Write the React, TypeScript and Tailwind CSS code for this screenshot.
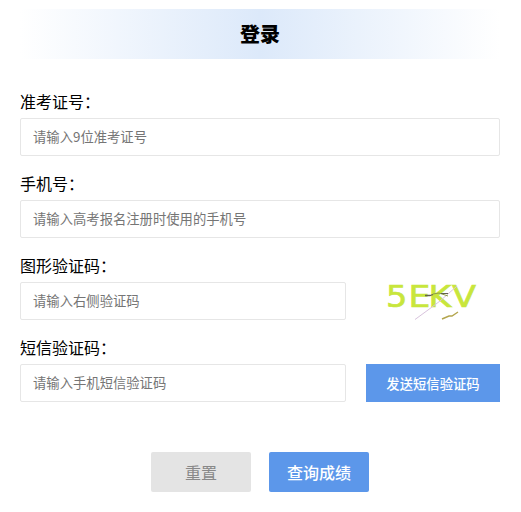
import React, { useState } from "react";

interface FieldProps {
  label: string;
  placeholder: string;
  value: string;
  onChange: (value: string) => void;
  children?: React.ReactNode;
}

const Field: React.FC<FieldProps> = ({
  label,
  placeholder,
  value,
  onChange,
  children,
}) => {
  return (
    <div>
      <label className="block h-8 text-base leading-[30px] text-black">
        {label}
      </label>
      <div className="flex gap-5">
        <input
          className="h-[38px] min-w-0 flex-1 rounded-[2px] border border-[#e6e6e6] bg-white pb-0.5 pl-3 text-[13.333px] text-black outline-none placeholder:text-[#757575]"
          placeholder={placeholder}
          value={value}
          onChange={(e) => onChange(e.target.value)}
        />
        {children}
      </div>
    </div>
  );
};

const Captcha: React.FC = () => {
  return (
    <svg className="h-[38px] w-[134px] overflow-visible" viewBox="0 0 134 38">
      <g
        fill="#c8e63c"
        stroke="#c8e63c"
        strokeWidth="0.7"
        fontFamily="'DejaVu Sans', sans-serif"
        fontSize="30"
      >
        <text transform="translate(19.9 24.7) scale(1.12 1)">5</text>
        <text transform="translate(42.4 24.7) scale(1.15 1)">E</text>
        <text transform="translate(62.4 24.7) scale(1.15 1)">K</text>
        <text transform="translate(86 24.7) scale(1.17 1)">V</text>
      </g>
      <g fill="none">
        <path d="M49 37.5 62 28 74 19 91 4" stroke="#d8c3dd" />
        <path d="M59 13.5h5l3-1" stroke="#62614e" strokeWidth="1.3" />
        <path d="M67 12l6-1 9 3" stroke="#8d9b45" />
        <path d="M75 11.5h7" stroke="#62614e" />
        <path d="M76 37l7-3h3l6-4" stroke="#b3a54d" strokeWidth="1.4" />
      </g>
    </svg>
  );
};

const App: React.FC = () => {
  const [form, setForm] = useState({
    ticket: "",
    phone: "",
    captcha: "",
    smsCode: "",
  });

  const handleReset = () => {
    setForm({ ticket: "", phone: "", captcha: "", smsCode: "" });
  };

  return (
    <div className="h-[512px] w-[521px] bg-white pt-[9px] pr-[21px] pl-5 font-['Noto_Sans_CJK_SC',sans-serif]">
      <h1 className="h-[50px] bg-linear-to-r/srgb from-white via-[#dce9fa] to-white text-center text-xl leading-[50px] font-black text-black">
        登录
      </h1>
      <form className="mt-[27px]" onSubmit={(e) => e.preventDefault()}>
        <div className="flex flex-col gap-3">
          <Field
            label="准考证号："
            placeholder="请输入9位准考证号"
            value={form.ticket}
            onChange={(ticket) => setForm({ ...form, ticket })}
          />
          <Field
            label="手机号："
            placeholder="请输入高考报名注册时使用的手机号"
            value={form.phone}
            onChange={(phone) => setForm({ ...form, phone })}
          />
          <Field
            label="图形验证码："
            placeholder="请输入右侧验证码"
            value={form.captcha}
            onChange={(captcha) => setForm({ ...form, captcha })}
          >
            <Captcha />
          </Field>
          <Field
            label="短信验证码："
            placeholder="请输入手机短信验证码"
            value={form.smsCode}
            onChange={(smsCode) => setForm({ ...form, smsCode })}
          >
            <button
              type="button"
              className="h-[38px] w-[134px] bg-[#5c97ea] pt-0.5 text-[13.333px] font-medium text-white"
            >
              发送短信验证码
            </button>
          </Field>
        </div>
        <div className="mt-[50px] flex justify-center gap-[18px]">
          <button
            type="button"
            className="h-10 w-[100px] rounded-[2px] bg-[#e4e4e4] text-base text-[#888888]"
            onClick={handleReset}
          >
            重置
          </button>
          <button
            type="submit"
            className="h-10 w-[100px] rounded-[2px] bg-[#5c97ea] text-base font-medium text-white"
          >
            查询成绩
          </button>
        </div>
      </form>
    </div>
  );
};

export default App;
